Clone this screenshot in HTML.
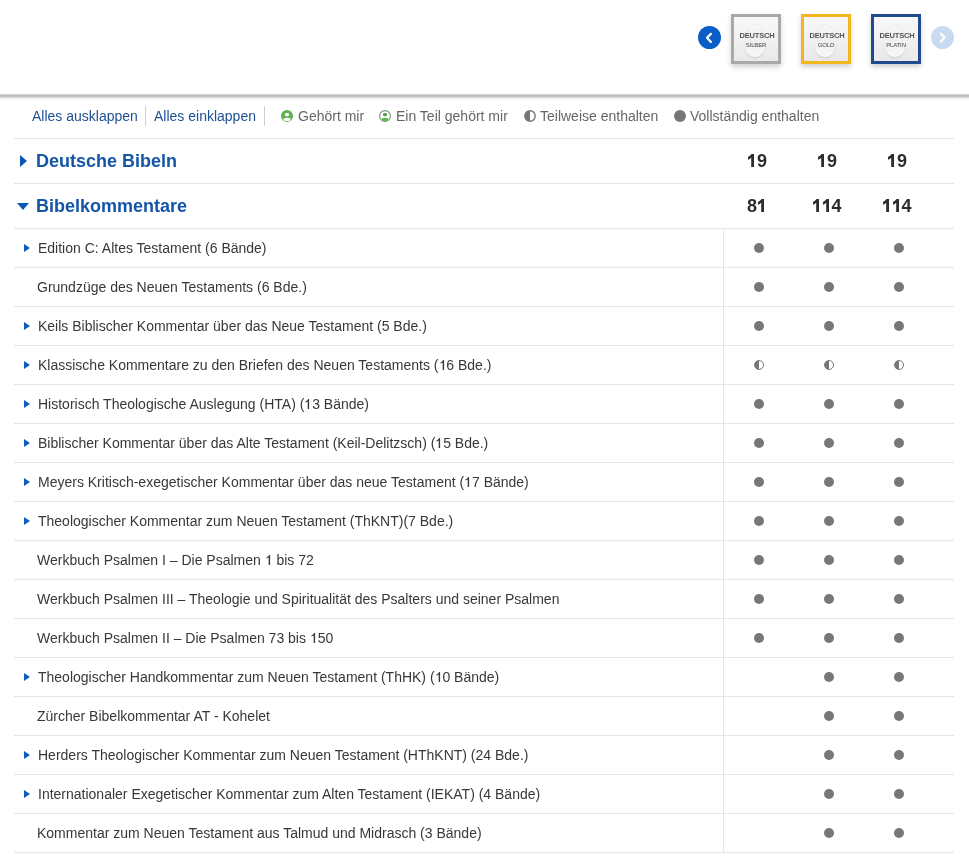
<!DOCTYPE html>
<html><head><meta charset="utf-8">
<style>
*{margin:0;padding:0;box-sizing:border-box}
html,body{width:969px;height:860px;overflow:hidden;background:#fff;font-family:"Liberation Sans",sans-serif}
.wrap{position:absolute;left:0;top:0;width:969px;height:860px;will-change:transform}
.abs{position:absolute}
.shadow{position:absolute;left:0;top:94px;width:969px;height:6px;background:linear-gradient(to bottom,#d4d4d4 0px,#d4d4d4 1px,#bdbdbd 1px,#bdbdbd 2px,#c3c3c3 2px,#c3c3c3 3px,#dadada 3px,#dadada 4px,#efefef 4px,#efefef 5px,#fafafa 5px,#fafafa 6px)}
.nav{position:absolute;top:26px;width:23px;height:23px;border-radius:50%}
.box{position:absolute;top:14px;width:50px;height:50px;border:3px solid #aaa;background:linear-gradient(to bottom,#f8f8f8,#e9e9e9);box-shadow:0 3px 5px rgba(0,0,0,0.18);overflow:hidden}
.eight .c1{position:absolute;left:13px;top:7px;width:16px;height:16px;border-radius:50%;border:1px solid rgba(0,0,0,0.05);box-shadow:inset 0 1px 1px rgba(255,255,255,0.8)}
.eight .c2{position:absolute;left:11px;top:20px;width:20px;height:20px;border-radius:50%;background:linear-gradient(#eeeeee,#f7f7f7);box-shadow:0 1.5px 2px rgba(0,0,0,0.10)}
.bt1{position:absolute;left:1px;width:44px;top:13.5px;text-align:center;font-size:7.5px;font-weight:bold;color:#555;letter-spacing:-0.2px}
.bt2{position:absolute;left:0;width:44px;top:24.5px;text-align:center;font-size:6px;color:#444;letter-spacing:-0.15px}
.tb{position:absolute;top:106px;height:20px;font-size:14px;line-height:20px;white-space:nowrap}
.link{color:#1f4f94}
.sep{position:absolute;top:106px;width:1px;height:20px;background:#d0d0d0}
.leg{color:#666}
.leg svg{position:absolute;top:4px;left:0}
.hline{position:absolute;left:14px;width:940px;height:1px;background:#e6e6e6}
.hdr{position:absolute;left:14px;width:940px;height:44px;line-height:44px;font-size:18px;font-weight:bold;color:#1555a8;white-space:nowrap}
.hdr .num{position:absolute;top:0;width:70px;text-align:center;color:#2d2d2d}
.srow{position:absolute;left:14px;width:940px;height:38px;font-size:14px;line-height:38px;color:#383838;white-space:nowrap}
.srow .st{position:absolute;left:23px;top:0}
.tri{position:absolute;left:10px;top:14.5px;width:0;height:0;border-top:4.5px solid transparent;border-bottom:4.5px solid transparent;border-left:6px solid #0f5cc0}
.dc{position:absolute;top:0;width:70px;height:38px;margin-left:-14px}
.dot{position:absolute;left:30px;top:14px;width:10px;height:10px;border-radius:50%;background:#777}
.half{position:absolute;left:30px;top:14px;width:10px;height:10px;border-radius:50%;border:1.3px solid #777;background:linear-gradient(to right,#777 50%,transparent 50%)}
.t1{color:transparent}
.one{position:absolute}
.vline{position:absolute;left:723px;top:228px;width:1px;height:625px;background:#e6e6e6}
</style></head><body><div class="wrap">
<div class="nav" style="left:698px;background:#0b5dc8"><svg width="23" height="23" viewBox="0 0 23 23"><path d="M12.9 7.9 L9.0 11.8 L12.9 15.9" fill="none" stroke="#fff" stroke-width="2.2" stroke-linecap="round" stroke-linejoin="round"/></svg></div>
<div class="box" style="left:731px;border-color:#a9a9a9"><div class="eight"><div class="c1"></div><div class="c2"></div></div><div class="bt1">DEUTSCH</div><div class="bt2">SILBER</div></div>
<div class="box" style="left:801px;border-color:#f3b61f"><div class="eight"><div class="c1"></div><div class="c2"></div></div><div class="bt1">DEUTSCH</div><div class="bt2">GOLD</div></div>
<div class="box" style="left:871px;border-color:#1f4b8e"><div class="eight"><div class="c1"></div><div class="c2"></div></div><div class="bt1">DEUTSCH</div><div class="bt2">PLATIN</div></div>
<div class="nav" style="left:931px;background:#c9dbf1"><svg width="23" height="23" viewBox="0 0 23 23"><path d="M9.8 7.6 L13.6 11.6 L9.8 15.6" fill="none" stroke="#fff" stroke-width="2.2" stroke-linecap="round" stroke-linejoin="round"/></svg></div>
<div class="shadow"></div>

<div class="tb link" style="left:32px">Alles ausklappen</div>
<div class="sep" style="left:145px"></div>
<div class="tb link" style="left:154px">Alles einklappen</div>
<div class="sep" style="left:264px"></div>
<div class="tb leg" style="left:281px;padding-left:17px"><svg width="12" height="12" viewBox="0 0 12 12"><circle cx="6" cy="6" r="6" fill="#5fb14f"/><rect x="4" y="3" width="4" height="3.2" rx="1.2" fill="#fff"/><path d="M2.6 8.4 Q6 7.2 9.4 8.4 L9.4 10.6 Q6 11.6 2.6 10.6Z" fill="#fff"/></svg>Gehört mir</div>
<div class="tb leg" style="left:379px;padding-left:17px"><svg width="12" height="12" viewBox="0 0 12 12"><circle cx="6" cy="6" r="5.4" fill="none" stroke="#6a9a66" stroke-width="1.1"/><rect x="4" y="3" width="4" height="3.2" rx="1.2" fill="#5aa552"/><path d="M2.9 8.3 Q6 7.3 9.1 8.3 L9.1 10 Q6 11.9 2.9 10Z" fill="#5fb84f"/></svg>Ein Teil gehört mir</div>
<div class="tb leg" style="left:524px;padding-left:16px"><svg width="12" height="12" viewBox="0 0 12 12"><circle cx="6" cy="6" r="5.2" fill="none" stroke="#777" stroke-width="1.4"/><path d="M6 0.8 A5.2 5.2 0 0 0 6 11.2Z" fill="#777"/></svg>Teilweise enthalten</div>
<div class="tb leg" style="left:674px;padding-left:16px"><svg width="12" height="12" viewBox="0 0 12 12"><circle cx="6" cy="6" r="6" fill="#777"/></svg>Vollständig enthalten</div>

<div class="hline" style="top:138px"></div>
<div class="hdr" style="top:139px"><span class="tri" style="left:6px;top:16px;border-top-width:6px;border-bottom-width:6px;border-left-width:7.5px;border-left-color:#0e57ba"></span><span style="position:absolute;left:22px">Deutsche Bibeln</span><span class="num" style="left:708px"><span class="t1">1</span>9</span><span class="num" style="left:778px"><span class="t1">1</span>9</span><span class="num" style="left:848px"><span class="t1">1</span>9</span></div>
<div class="hline" style="top:183px"></div>
<div class="hdr" style="top:184px"><span class="tri" style="left:3px;top:19px;border-left:6px solid transparent;border-right:6px solid transparent;border-top:7.5px solid #0e57ba;border-bottom:0"></span><span style="position:absolute;left:22px">Bibelkommentare</span><span class="num" style="left:708px">8<span class="t1">1</span></span><span class="num" style="left:778px"><span class="t1">1</span><span class="t1">1</span>4</span><span class="num" style="left:848px"><span class="t1">1</span><span class="t1">1</span>4</span></div>
<div class="hline" style="top:228px"></div>
<div class="hline" style="top:267px"></div>
<div class="hline" style="top:306px"></div>
<div class="hline" style="top:345px"></div>
<div class="hline" style="top:384px"></div>
<div class="hline" style="top:423px"></div>
<div class="hline" style="top:462px"></div>
<div class="hline" style="top:501px"></div>
<div class="hline" style="top:540px"></div>
<div class="hline" style="top:579px"></div>
<div class="hline" style="top:618px"></div>
<div class="hline" style="top:657px"></div>
<div class="hline" style="top:696px"></div>
<div class="hline" style="top:735px"></div>
<div class="hline" style="top:774px"></div>
<div class="hline" style="top:813px"></div>
<div class="hline" style="top:852px"></div>
<div class="vline"></div>
<svg class="one" style="left:747px;top:154px" width="10" height="13" viewBox="0 0 10 13"><path d="M4.6 0 H7 V13 H4.2 V3.7 Q2.8 5 1 5.8 V2.9 Q3.6 1.7 4.6 0 Z" fill="#2d2d2d"/></svg><svg class="one" style="left:817px;top:154px" width="10" height="13" viewBox="0 0 10 13"><path d="M4.6 0 H7 V13 H4.2 V3.7 Q2.8 5 1 5.8 V2.9 Q3.6 1.7 4.6 0 Z" fill="#2d2d2d"/></svg><svg class="one" style="left:887px;top:154px" width="10" height="13" viewBox="0 0 10 13"><path d="M4.6 0 H7 V13 H4.2 V3.7 Q2.8 5 1 5.8 V2.9 Q3.6 1.7 4.6 0 Z" fill="#2d2d2d"/></svg><svg class="one" style="left:757px;top:199px" width="10" height="13" viewBox="0 0 10 13"><path d="M4.6 0 H7 V13 H4.2 V3.7 Q2.8 5 1 5.8 V2.9 Q3.6 1.7 4.6 0 Z" fill="#2d2d2d"/></svg><svg class="one" style="left:812px;top:199px" width="10" height="13" viewBox="0 0 10 13"><path d="M4.6 0 H7 V13 H4.2 V3.7 Q2.8 5 1 5.8 V2.9 Q3.6 1.7 4.6 0 Z" fill="#2d2d2d"/></svg><svg class="one" style="left:822px;top:199px" width="10" height="13" viewBox="0 0 10 13"><path d="M4.6 0 H7 V13 H4.2 V3.7 Q2.8 5 1 5.8 V2.9 Q3.6 1.7 4.6 0 Z" fill="#2d2d2d"/></svg><svg class="one" style="left:882px;top:199px" width="10" height="13" viewBox="0 0 10 13"><path d="M4.6 0 H7 V13 H4.2 V3.7 Q2.8 5 1 5.8 V2.9 Q3.6 1.7 4.6 0 Z" fill="#2d2d2d"/></svg><svg class="one" style="left:892px;top:199px" width="10" height="13" viewBox="0 0 10 13"><path d="M4.6 0 H7 V13 H4.2 V3.7 Q2.8 5 1 5.8 V2.9 Q3.6 1.7 4.6 0 Z" fill="#2d2d2d"/></svg><svg class="one" style="left:438.5px;top:357px" width="8" height="16" viewBox="0 0 8 16"><path d="M4.2 3 H5.1 V13 H3.7 V5.5 Q2.9 6.1 1.5 6.6 V5.4 Q3.3 4.6 4.2 3 Z" fill="#383838"/></svg><svg class="one" style="left:304.375px;top:396px" width="8" height="16" viewBox="0 0 8 16"><path d="M4.2 3 H5.1 V13 H3.7 V5.5 Q2.9 6.1 1.5 6.6 V5.4 Q3.3 4.6 4.2 3 Z" fill="#383838"/></svg><svg class="one" style="left:435.328125px;top:435px" width="8" height="16" viewBox="0 0 8 16"><path d="M4.2 3 H5.1 V13 H3.7 V5.5 Q2.9 6.1 1.5 6.6 V5.4 Q3.3 4.6 4.2 3 Z" fill="#383838"/></svg><svg class="one" style="left:464.140625px;top:474px" width="8" height="16" viewBox="0 0 8 16"><path d="M4.2 3 H5.1 V13 H3.7 V5.5 Q2.9 6.1 1.5 6.6 V5.4 Q3.3 4.6 4.2 3 Z" fill="#383838"/></svg><svg class="one" style="left:264.71875px;top:552px" width="8" height="16" viewBox="0 0 8 16"><path d="M4.2 3 H5.1 V13 H3.7 V5.5 Q2.9 6.1 1.5 6.6 V5.4 Q3.3 4.6 4.2 3 Z" fill="#383838"/></svg><svg class="one" style="left:309.859375px;top:630px" width="8" height="16" viewBox="0 0 8 16"><path d="M4.2 3 H5.1 V13 H3.7 V5.5 Q2.9 6.1 1.5 6.6 V5.4 Q3.3 4.6 4.2 3 Z" fill="#383838"/></svg><svg class="one" style="left:434.5625px;top:669px" width="8" height="16" viewBox="0 0 8 16"><path d="M4.2 3 H5.1 V13 H3.7 V5.5 Q2.9 6.1 1.5 6.6 V5.4 Q3.3 4.6 4.2 3 Z" fill="#383838"/></svg>
<div class="srow" style="top:229px"><span class=tri></span><span class="st" style=left:24px>Edition C: Altes Testament (6 Bände)</span><div class="dc" style="left:724px"><span class="dot"></span></div><div class="dc" style="left:794px"><span class="dot"></span></div><div class="dc" style="left:864px"><span class="dot"></span></div></div>
<div class="srow" style="top:268px"><span class="st">Grundzüge des Neuen Testaments (6 Bde.)</span><div class="dc" style="left:724px"><span class="dot"></span></div><div class="dc" style="left:794px"><span class="dot"></span></div><div class="dc" style="left:864px"><span class="dot"></span></div></div>
<div class="srow" style="top:307px"><span class=tri></span><span class="st" style=left:24px>Keils Biblischer Kommentar über das Neue Testament (5 Bde.)</span><div class="dc" style="left:724px"><span class="dot"></span></div><div class="dc" style="left:794px"><span class="dot"></span></div><div class="dc" style="left:864px"><span class="dot"></span></div></div>
<div class="srow" style="top:346px"><span class=tri></span><span class="st" style=left:24px>Klassische Kommentare zu den Briefen des Neuen Testaments (<span class=t1>1</span>6 Bde.)</span><div class="dc" style="left:724px"><span class="half"></span></div><div class="dc" style="left:794px"><span class="half"></span></div><div class="dc" style="left:864px"><span class="half"></span></div></div>
<div class="srow" style="top:385px"><span class=tri></span><span class="st" style=left:24px>Historisch Theologische Auslegung (HTA) (<span class=t1>1</span>3 Bände)</span><div class="dc" style="left:724px"><span class="dot"></span></div><div class="dc" style="left:794px"><span class="dot"></span></div><div class="dc" style="left:864px"><span class="dot"></span></div></div>
<div class="srow" style="top:424px"><span class=tri></span><span class="st" style=left:24px>Biblischer Kommentar über das Alte Testament (Keil-Delitzsch) (<span class=t1>1</span>5 Bde.)</span><div class="dc" style="left:724px"><span class="dot"></span></div><div class="dc" style="left:794px"><span class="dot"></span></div><div class="dc" style="left:864px"><span class="dot"></span></div></div>
<div class="srow" style="top:463px"><span class=tri></span><span class="st" style=left:24px>Meyers Kritisch-exegetischer Kommentar über das neue Testament (<span class=t1>1</span>7 Bände)</span><div class="dc" style="left:724px"><span class="dot"></span></div><div class="dc" style="left:794px"><span class="dot"></span></div><div class="dc" style="left:864px"><span class="dot"></span></div></div>
<div class="srow" style="top:502px"><span class=tri></span><span class="st" style=left:24px>Theologischer Kommentar zum Neuen Testament (ThKNT)(7 Bde.)</span><div class="dc" style="left:724px"><span class="dot"></span></div><div class="dc" style="left:794px"><span class="dot"></span></div><div class="dc" style="left:864px"><span class="dot"></span></div></div>
<div class="srow" style="top:541px"><span class="st">Werkbuch Psalmen I – Die Psalmen <span class=t1>1</span> bis 72</span><div class="dc" style="left:724px"><span class="dot"></span></div><div class="dc" style="left:794px"><span class="dot"></span></div><div class="dc" style="left:864px"><span class="dot"></span></div></div>
<div class="srow" style="top:580px"><span class="st">Werkbuch Psalmen III – Theologie und Spiritualität des Psalters und seiner Psalmen</span><div class="dc" style="left:724px"><span class="dot"></span></div><div class="dc" style="left:794px"><span class="dot"></span></div><div class="dc" style="left:864px"><span class="dot"></span></div></div>
<div class="srow" style="top:619px"><span class="st">Werkbuch Psalmen II – Die Psalmen 73 bis <span class=t1>1</span>50</span><div class="dc" style="left:724px"><span class="dot"></span></div><div class="dc" style="left:794px"><span class="dot"></span></div><div class="dc" style="left:864px"><span class="dot"></span></div></div>
<div class="srow" style="top:658px"><span class=tri></span><span class="st" style=left:24px>Theologischer Handkommentar zum Neuen Testament (ThHK) (<span class=t1>1</span>0 Bände)</span><div class="dc" style="left:724px"></div><div class="dc" style="left:794px"><span class="dot"></span></div><div class="dc" style="left:864px"><span class="dot"></span></div></div>
<div class="srow" style="top:697px"><span class="st">Zürcher Bibelkommentar AT - Kohelet</span><div class="dc" style="left:724px"></div><div class="dc" style="left:794px"><span class="dot"></span></div><div class="dc" style="left:864px"><span class="dot"></span></div></div>
<div class="srow" style="top:736px"><span class=tri></span><span class="st" style=left:24px>Herders Theologischer Kommentar zum Neuen Testament (HThKNT) (24 Bde.)</span><div class="dc" style="left:724px"></div><div class="dc" style="left:794px"><span class="dot"></span></div><div class="dc" style="left:864px"><span class="dot"></span></div></div>
<div class="srow" style="top:775px"><span class=tri></span><span class="st" style=left:24px>Internationaler Exegetischer Kommentar zum Alten Testament (IEKAT) (4 Bände)</span><div class="dc" style="left:724px"></div><div class="dc" style="left:794px"><span class="dot"></span></div><div class="dc" style="left:864px"><span class="dot"></span></div></div>
<div class="srow" style="top:814px"><span class="st">Kommentar zum Neuen Testament aus Talmud und Midrasch (3 Bände)</span><div class="dc" style="left:724px"></div><div class="dc" style="left:794px"><span class="dot"></span></div><div class="dc" style="left:864px"><span class="dot"></span></div></div>
</div></body></html>
